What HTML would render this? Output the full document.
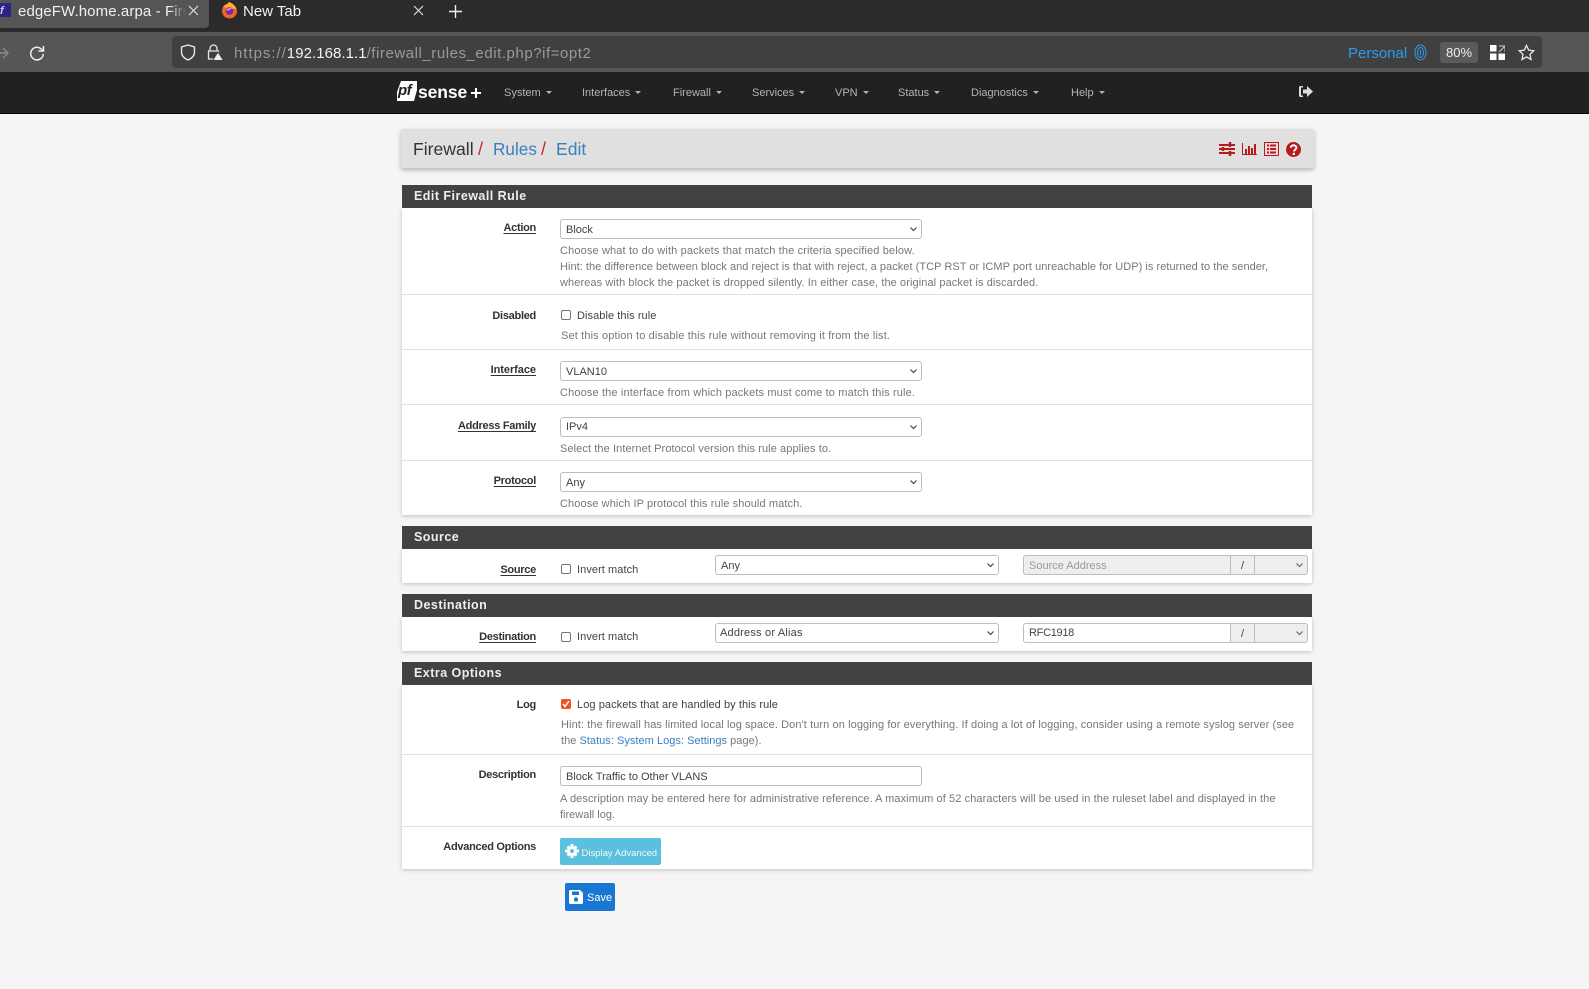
<!DOCTYPE html>
<html><head><meta charset="utf-8"><title>edgeFW.home.arpa - Firewall: Rules: Edit</title>
<style>
html,body{margin:0;padding:0;width:1589px;height:989px;overflow:hidden;background:#f5f5f5;font-family:"Liberation Sans",sans-serif}
div,span.a,svg.a{position:absolute;box-sizing:border-box}
.t{position:absolute;white-space:nowrap;line-height:16px;height:16px;font-size:11px;margin-top:1px}
.h{color:#777}
.l{color:#333;font-weight:bold;text-align:right;right:1053px;letter-spacing:-.28px}
.l u{text-decoration:underline;text-underline-offset:2px}
.d{color:#424242;letter-spacing:.07px}
.n{color:#b4b4b4;font-size:11px;top:84px}
.n:after{content:"";display:inline-block;border-top:3px solid #b4b4b4;border-left:3px solid transparent;border-right:3px solid transparent;margin-left:5px;vertical-align:2px}
.ph{left:402px;width:910px;height:23px;background:#424242;color:#eee;font-size:12.5px;font-weight:bold;letter-spacing:.47px;line-height:22px;padding-left:12px}
.pb{left:402px;width:910px;background:#fff;box-shadow:0 1px 4px rgba(0,0,0,.22)}
.sep{left:402px;width:910px;height:1px;background:#e2e2e2}
.s{background:#fff;border:1px solid #bdbdbd;border-radius:3px;height:20px;font-size:11px;color:#424242;line-height:20px;padding-left:5px;white-space:nowrap}
.s svg{position:absolute;right:4px;top:7px}
.c{width:10px;height:10px;left:561px;border:1px solid #777;border-radius:2px;background:#fff}
</style></head><body>

<!-- browser chrome -->
<div style="left:0;top:0;width:1589px;height:32px;background:#2b2b2b"></div>
<div style="left:0;top:0;width:209px;height:28px;background:#555;border-radius:0 0 4px 0"></div>
<svg class="a" style="left:0;top:3px" width="11" height="14"><rect width="11" height="14" fill="#2b2480"/><text x="0" y="11" font-size="11" font-weight="bold" font-style="italic" fill="#cfc9ff" font-family="Liberation Sans">f</text></svg>
<div class="t" style="left:18px;top:3px;font-size:15px;color:#f0f0f0;width:168px;overflow:hidden;letter-spacing:.1px;-webkit-mask-image:linear-gradient(90deg,#000 90%,transparent)">edgeFW.home.arpa - Firewall</div>
<svg class="a" style="left:188px;top:5px" width="11" height="11" stroke="#ddd" stroke-width="1.2"><path d="M1 1l9 9M10 1l-9 9"/></svg>
<svg class="a" style="left:221px;top:1px" width="17" height="18"><circle cx="8.500" cy="10" r="7.500" fill="#f4622a"/><path d="M2 6C4 3 6 4 8 1c3 1 6 3 7 7z" fill="#ffb02e"/><circle cx="8.500" cy="10" r="3.800" fill="#5b2fb8"/><path d="M5 9c1-2 5-3 7-1-2 0-3 0-4 2z" fill="#f7a"/></svg>
<div class="t" style="left:243px;top:3px;font-size:15px;color:#f2f2f2">New Tab</div>
<svg class="a" style="left:413px;top:5px" width="11" height="11" stroke="#ddd" stroke-width="1.2"><path d="M1 1l9 9M10 1l-9 9"/></svg>
<svg class="a" style="left:449px;top:5px" width="13" height="13" stroke="#eee" stroke-width="1.4"><path d="M6.500 0v13M0 6.500h13"/></svg>

<div style="left:0;top:32px;width:1589px;height:40px;background:#565656"></div>
<svg class="a" style="left:0;top:46px" width="9" height="14" stroke="#8a8a8a" stroke-width="1.4" fill="none"><path d="M-3 7h10M3 2l5 5-5 5"/></svg>
<svg class="a" style="left:29px;top:45px" width="16" height="16" stroke="#eee" stroke-width="1.5" fill="none"><path d="M13.500 5.500A6.300 6.300 0 1 0 14.300 9"/><path d="M14.500 1v5h-5" /></svg>
<div style="left:172px;top:36px;width:1370px;height:32px;background:#404040;border-radius:4px"></div>
<svg class="a" style="left:180px;top:44px" width="16" height="17" stroke="#e6e6e6" stroke-width="1.4" fill="none"><path d="M8 1l6.500 2v5c0 4-3 6.500-6.500 8C4.500 14.500 1.500 12 1.500 8V3z"/></svg>
<svg class="a" style="left:207px;top:44px" width="17" height="17"><path d="M3 7V4.500a3.500 3.500 0 0 1 7 0V7M1.500 7h10v8h-10z" stroke="#e6e6e6" stroke-width="1.3" fill="none"/><path d="M11 8l5.500 8.500h-11z" fill="#eee" stroke="#404040"/></svg>
<div class="t" style="left:234px;top:45px;font-size:15px;color:#9a9a9a;letter-spacing:.55px"><span style="letter-spacing:.97px">https://</span><span style="color:#f4f4f4;letter-spacing:.05px">192.168.1.1</span>/firewall_rules_edit.php?if=opt2</div>
<div class="t" style="left:1348px;top:45px;font-size:15px;color:#2f9be8">Personal</div>
<svg class="a" style="left:1414px;top:44px" width="13" height="17" stroke="#2f9be8" fill="none"><ellipse cx="6.500" cy="8.500" rx="5.500" ry="7.500"/><ellipse cx="6.500" cy="8.500" rx="3" ry="5"/><path d="M6.500 6v5"/></svg>
<div style="left:1440px;top:42px;width:38px;height:21px;background:#5a5a5a;border-radius:3px;color:#eee;font-size:13px;text-align:center;line-height:22px">80%</div>
<svg class="a" style="left:1490px;top:45px" width="15" height="15" fill="#fff"><rect width="6.500" height="6.500"/><rect y="8.500" width="6.500" height="6.500"/><rect x="8.500" y="8.500" width="6.500" height="6.500"/><path d="M9 1h6v6M15 1l-6 6" stroke="#ccc" fill="none" stroke-width="1"/></svg>
<svg class="a" style="left:1518px;top:44px" width="17" height="17" stroke="#e8e8e8" stroke-width="1.3" fill="none"><path d="M8.500 1.500l2.200 4.700 5 .6-3.700 3.500 1 5.200-4.500-2.600-4.500 2.600 1-5.200L1.300 6.800l5-.6z"/></svg>

<!-- navbar -->
<div style="left:0;top:72px;width:1589px;height:42px;background:#212121;border-bottom:1px solid #000"></div>
<div style="left:397px;top:81px;width:20px;height:20px;background:#fff;clip-path:polygon(20% 0,100% 0,100% 45%,85% 100%,0 100%,0 55%)"></div>
<div class="t" style="left:398px;top:82px;font-size:15px;font-weight:bold;font-style:italic;color:#212121;letter-spacing:-.5px">pf</div>
<div class="t" style="left:418px;top:83px;font-size:17.500px;font-weight:bold;color:#fff;letter-spacing:-.1px">sense</div>
<svg class="a" style="left:471px;top:88px" width="10" height="10" fill="#fff"><path d="M4 0h2v4h4v2H6v4H4V6H0V4h4z"/></svg>
<div class="t n" style="left:504px">System</div>
<div class="t n" style="left:582px">Interfaces</div>
<div class="t n" style="left:673px">Firewall</div>
<div class="t n" style="left:752px">Services</div>
<div class="t n" style="left:835px">VPN</div>
<div class="t n" style="left:898px">Status</div>
<div class="t n" style="left:971px">Diagnostics</div>
<div class="t n" style="left:1071px">Help</div>
<svg class="a" style="left:1298px;top:85px" width="15" height="13" fill="#ddd"><path d="M5 1H2.500Q1 1 1 2.500v8Q1 12 2.500 12H5v-1.500H3V2.500h2z"/><path d="M5 4.500h4V1l6 5.500-6 5.500V8.500H5z"/></svg>

<!-- breadcrumb -->
<div style="left:401px;top:129px;width:913px;height:39px;background:#e0e0e0;box-shadow:0 2px 5px rgba(0,0,0,.28);border-radius:2px"></div>
<div class="t" style="left:413px;top:140px;font-size:17.600px;color:#333">Firewall</div>
<div class="t" style="left:478px;top:140px;font-size:18px;color:#c62828">/</div>
<div class="t" style="left:493px;top:140px;font-size:17.200px;color:#3a7fc0">Rules</div>
<div class="t" style="left:541px;top:140px;font-size:18px;color:#c62828">/</div>
<div class="t" style="left:556px;top:140px;font-size:17.600px;color:#3a7fc0">Edit</div>
<svg class="a" style="left:1219px;top:142px" width="16" height="14" stroke="#b71c1c" stroke-width="2" fill="none"><path d="M0 3h16M0 7h16M0 11h16"/><path d="M11 0v5M4 5v4M11 9v5" stroke-width="2.500"/></svg>
<svg class="a" style="left:1242px;top:142px" width="15" height="14" fill="#b71c1c"><path d="M0 1h1v11h15v1H0z"/><rect x="3" y="7" width="2" height="5"/><rect x="6" y="4" width="2" height="8"/><rect x="9" y="6" width="2" height="6"/><rect x="12" y="2" width="2" height="10"/></svg>
<svg class="a" style="left:1264px;top:142px" width="15" height="14"><rect x=".5" y=".5" width="14" height="13" fill="#f3d9d9" stroke="#b71c1c"/><path d="M3 3.500h2M6 3.500h6M3 7h2M6 7h6M3 10.500h2M6 10.500h6" stroke="#b71c1c" stroke-width="2"/></svg>
<svg class="a" style="left:1286px;top:142px" width="15" height="15"><circle cx="7.500" cy="7.500" r="7.500" fill="#b71c1c"/><path d="M4.800 5.800c0-3.400 5.600-3.400 5.600 0 0 2-2.500 2-2.500 3.700" stroke="#fff" stroke-width="1.900" fill="none"/><rect x="6.700" y="10.800" width="2.200" height="2.200" fill="#fff"/></svg>

<!-- Edit Firewall Rule panel -->
<div class="pb" style="top:208px;height:307px"></div>
<div class="ph" style="top:185px">Edit Firewall Rule</div>
<div class="sep" style="top:294px"></div><div class="sep" style="top:349px"></div><div class="sep" style="top:404px"></div><div class="sep" style="top:460px"></div>

<div class="t l" style="top:219px"><u>Action</u></div>
<div class="s" style="left:560px;top:219px;width:362px">Block<svg width="7" height="5" fill="none" stroke="#444" stroke-width="1.200"><path d="M.5.500l3 3 3-3"/></svg></div>
<div class="t h" style="left:560px;top:242px;letter-spacing:.14px">Choose what to do with packets that match the criteria specified below.</div>
<div class="t h" style="left:560px;top:258px;letter-spacing:.04px">Hint: the difference between block and reject is that with reject, a packet (TCP RST or ICMP port unreachable for UDP) is returned to the sender,</div>
<div class="t h" style="left:560px;top:274px;letter-spacing:.09px">whereas with block the packet is dropped silently. In either case, the original packet is discarded.</div>

<div class="t l" style="top:307px">Disabled</div>
<div class="c" style="top:310px"></div>
<div class="t d" style="left:577px;top:307px">Disable this rule</div>
<div class="t h" style="left:561px;top:327px;letter-spacing:.14px">Set this option to disable this rule without removing it from the list.</div>

<div class="t l" style="top:361px;letter-spacing:-.05px"><u>Interface</u></div>
<div class="s" style="left:560px;top:361px;width:362px">VLAN10<svg width="7" height="5" fill="none" stroke="#444" stroke-width="1.200"><path d="M.5.500l3 3 3-3"/></svg></div>
<div class="t h" style="left:560px;top:384px;letter-spacing:.14px">Choose the interface from which packets must come to match this rule.</div>

<div class="t l" style="top:417px"><u>Address Family</u></div>
<div class="s" style="left:560px;top:417px;width:362px;line-height:19px">IPv4<svg width="7" height="5" fill="none" stroke="#444" stroke-width="1.200"><path d="M.5.500l3 3 3-3"/></svg></div>
<div class="t h" style="left:560px;top:440px;letter-spacing:.09px">Select the Internet Protocol version this rule applies to.</div>

<div class="t l" style="top:472px"><u>Protocol</u></div>
<div class="s" style="left:560px;top:472px;width:362px">Any<svg width="7" height="5" fill="none" stroke="#444" stroke-width="1.200"><path d="M.5.500l3 3 3-3"/></svg></div>
<div class="t h" style="left:560px;top:495px;letter-spacing:.1px">Choose which IP protocol this rule should match.</div>

<!-- Source -->
<div class="pb" style="top:549px;height:34px"></div>
<div class="ph" style="top:526px">Source</div>
<div class="t l" style="top:561px"><u>Source</u></div>
<div class="c" style="top:564px"></div>
<div class="t d" style="left:577px;top:561px">Invert match</div>
<div class="s" style="left:715px;top:555px;width:284px">Any<svg width="7" height="5" fill="none" stroke="#444" stroke-width="1.200"><path d="M.5.500l3 3 3-3"/></svg></div>
<div class="s" style="left:1023px;top:555px;width:208px;background:#eee;color:#999;border-radius:3px 0 0 3px">Source Address</div>
<div class="s" style="left:1230px;top:555px;width:25px;background:#eee;border-radius:0;text-align:center;padding:0">/</div>
<div class="s" style="left:1254px;top:555px;width:54px;background:#eee;border-radius:0 3px 3px 0"><svg width="7" height="5" fill="none" stroke="#666" stroke-width="1.200"><path d="M.5.500l3 3 3-3"/></svg></div>

<!-- Destination -->
<div class="pb" style="top:617px;height:34px"></div>
<div class="ph" style="top:594px">Destination</div>
<div class="t l" style="top:628px"><u>Destination</u></div>
<div class="c" style="top:632px"></div>
<div class="t d" style="left:577px;top:628px">Invert match</div>
<div class="s" style="left:715px;top:623px;width:284px;padding-left:4px;letter-spacing:.2px;line-height:19px">Address or Alias<svg width="7" height="5" fill="none" stroke="#444" stroke-width="1.200"><path d="M.5.500l3 3 3-3"/></svg></div>
<div class="s" style="left:1023px;top:623px;width:208px;border-radius:3px 0 0 3px;letter-spacing:-.3px;line-height:19px">RFC1918</div>
<div class="s" style="left:1230px;top:623px;width:25px;background:#eee;border-radius:0;text-align:center;padding:0">/</div>
<div class="s" style="left:1254px;top:623px;width:54px;background:#eee;border-radius:0 3px 3px 0"><svg width="7" height="5" fill="none" stroke="#666" stroke-width="1.200"><path d="M.5.500l3 3 3-3"/></svg></div>

<!-- Extra Options -->
<div class="pb" style="top:684px;height:185px"></div>
<div class="ph" style="top:662px">Extra Options</div>
<div class="sep" style="top:754px"></div><div class="sep" style="top:826px"></div>

<div class="t l" style="top:696px">Log</div>
<div class="c" style="top:699px;background:#f4511e;border-color:#f4511e"></div>
<svg class="a" style="left:562px;top:700px" width="8" height="8" fill="none" stroke="#fff" stroke-width="1.500"><path d="M1 4l2 2.500L7 1"/></svg>
<div class="t d" style="left:577px;top:696px">Log packets that are handled by this rule</div>
<div class="t h" style="left:561px;top:716px;letter-spacing:.09px">Hint: the firewall has limited local log space. Don't turn on logging for everything. If doing a lot of logging, consider using a remote syslog server (see</div>
<div class="t h" style="left:561px;top:732px;letter-spacing:.03px">the <span style="color:#3a7fc0">Status: System Logs: Settings</span> page).</div>

<div class="t l" style="top:766px">Description</div>
<div class="s" style="left:560px;top:766px;width:362px;height:20px">Block Traffic to Other VLANS</div>
<div class="t h" style="left:560px;top:790px;letter-spacing:.09px">A description may be entered here for administrative reference. A maximum of 52 characters will be used in the ruleset label and displayed in the</div>
<div class="t h" style="left:560px;top:806px">firewall log.</div>

<div class="t l" style="top:838px">Advanced Options</div>
<div style="left:560px;top:838px;width:101px;height:27px;background:#5bc0de;border-radius:2px"></div>
<svg class="a" style="left:565px;top:844px" width="14" height="14" fill="#fff"><circle cx="7" cy="7" r="5"/><path d="M5.500 0h3v3h-3zM5.500 11h3v3h-3zM0 5.500h3v3H0zM11 5.500h3v3h-3zM1.500 3.500l2-2 2 2-2 2zM8.500 3.500l2-2 2 2-2 2zM1.500 10.500l2-2 2 2-2 2zM8.500 10.500l2-2 2 2-2 2z"/><circle cx="7" cy="7" r="2" fill="#5bc0de"/></svg>
<div class="t" style="left:581.500px;top:845px;font-size:9.500px;color:#eef9fc">Display Advanced</div>

<div style="left:565px;top:883px;width:50px;height:28px;background:#1976d2;border-radius:2px"></div>
<svg class="a" style="left:569px;top:890px" width="14" height="14" fill="#fff"><path d="M1.500 0H11l3 3v9.500q0 1.500-1.500 1.500h-11Q0 14 0 12.500v-11Q0 0 1.500 0z"/><rect x="3" y="1.500" width="7" height="3.500" fill="#1976d2"/><circle cx="7" cy="9.500" r="2.200" fill="#1976d2"/></svg>
<div class="t" style="left:587px;top:889px;font-size:11px;color:#fff">Save</div>

</body></html>
